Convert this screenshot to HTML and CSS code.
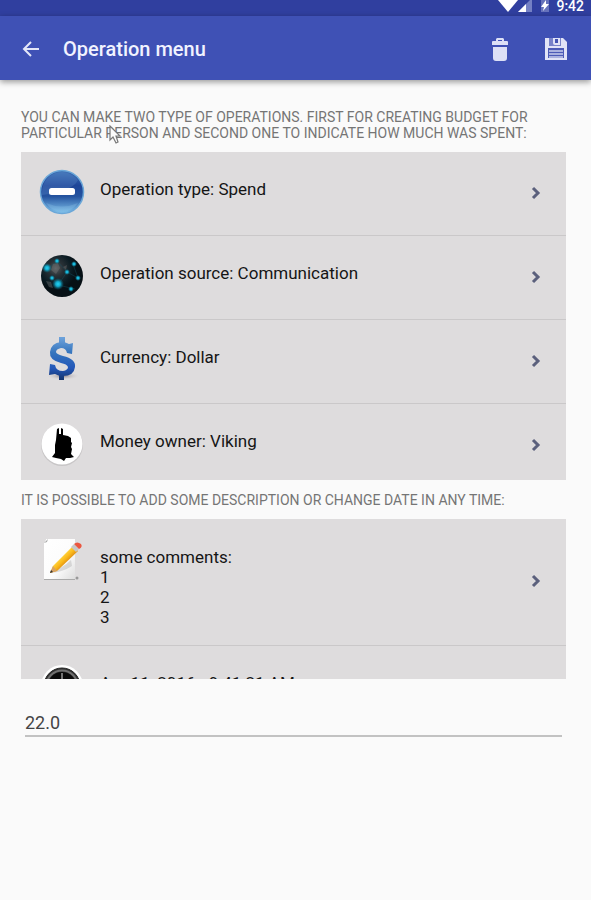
FILE: index.html
```html
<!DOCTYPE html>
<html lang="en">
<head>
<meta charset="utf-8">
<meta name="viewport" content="width=device-width, initial-scale=1">
<title>Operation menu</title>
<link rel="stylesheet" href="styles.css">
</head>
<body>
<div class="status">
  <svg class="status-icons" width="54" height="16" viewBox="0 0 54 16" aria-hidden="true">
    <path d="M0 0H20L10 12Z" fill="#fff"/>
    <path d="M34 -2V12H20Z" fill="#7480c4"/>
    <path d="M28 4V12H20Z" fill="#fff"/>
    <path d="M43 0H51V12H43Z" fill="#6672bb"/>
    <path d="M48 0L43 7H46L45 11L51 4H48Z" fill="#fff"/>
  </svg>
  <span class="clock">9:42</span>
</div>
<header class="bar">
  <button class="icon-button" type="button" aria-label="Back">
    <svg width="18" height="18" viewBox="0 0 18 18" fill="none" stroke="#e4e7f8" stroke-width="2"><path d="M17 9H2M9 2L2 9L9 16"/></svg>
  </button>
  <h1 class="title">Operation menu</h1>
  <button class="icon-button" type="button" aria-label="Delete">
    <svg width="18" height="24" viewBox="0 0 18 24" fill="#dce0f6"><path d="M1 5Q1 4 2 4H5V2L6 1H12L13 2V4H16Q17 4 17 5V8H1ZM7 3V4H11V3ZM2 10H16V21Q16 24 13 24H5Q2 24 2 21Z" fill-rule="evenodd"/></svg>
  </button>
  <button class="icon-button save" type="button" aria-label="Save">
    <svg width="24" height="24" viewBox="0 0 24 24"><path d="M1 1H19L23 5V23H1Z" fill="#e1e4f7"/><path d="M5 1H17V9H5Z" fill="#7883c9"/><path d="M9 1H16V8H11Q9 8 9 6Z" fill="#e1e4f7"/><path d="M11 2H14V6H11Z" fill="#4455b3"/><path d="M4 11H20V21H4Z" fill="#4c5bb7"/><path d="M5 13H19V15H5ZM5 16H19V18H5ZM5 19H19V21H5Z" fill="#aab2df"/></svg>
  </button>
</header>
<main class="content">
  <div class="hint-wrap">
    <h2 class="hint">You can make two type of operations. First for creating budget for particular person and second one to indicate how much was spent:</h2>
    <svg class="pointer" width="14" height="20" viewBox="0 0 14 20" aria-hidden="true"><path d="M2 1V15L5 12L8 18L10 17L8 11H12Z" fill="#fafafa" stroke="#777" stroke-width="1.2"/></svg>
  </div>
  <ul class="list list-main">
    <li><button class="row" type="button">
      <svg class="picture" width="48" height="48" viewBox="0 0 48 48" aria-hidden="true">
        <defs><linearGradient id="ball" x2="0" y2="1"><stop stop-color="#3d72b7"/><stop offset=".35" stop-color="#1e4598"/><stop offset=".6" stop-color="#24539f"/><stop offset="1" stop-color="#82c4ed"/></linearGradient></defs>
        <circle cx="24" cy="24" r="21.5" fill="url(#ball)" stroke="#6ba7d8" stroke-width="1.5"/>
        <path d="M4 24A20 20 0 0 1 40 12Q35 23 4 27Z" fill="#6d9bd2" opacity=".25"/>
        <path d="M8 35A19 19 0 0 0 40 35Q24 42 8 35Z" fill="#a9dcf4" opacity=".2"/>
        <rect x="11" y="20" width="26" height="7" rx="2.5" fill="#fff"/>
      </svg>
      <span class="label">Operation type: Spend</span>
      <svg class="chevron" width="10" height="14" viewBox="0 0 10 14" aria-hidden="true"><path d="M2 2L7 7L2 12"/></svg>
    </button></li>
    <li><button class="row" type="button">
      <svg class="picture" width="48" height="48" viewBox="0 0 48 48" aria-hidden="true">
        <defs><radialGradient id="globe" cx=".35" cy=".32"><stop stop-color="#555b5e"/><stop offset=".35" stop-color="#293136"/><stop offset=".75" stop-color="#0b1c23"/><stop offset="1" stop-color="#071015"/></radialGradient><radialGradient id="spot"><stop stop-color="#24d4f4"/><stop offset=".4" stop-color="#13a8ca"/><stop offset="1" stop-color="#0a6377" stop-opacity="0"/></radialGradient></defs>
        <circle cx="24" cy="24" r="21" fill="url(#globe)"/>
        <path d="M9 17L19 9L29 20L20 33L37 37M29 20L40 26L35 12M14 26L20 33" fill="none" stroke="#155263" stroke-width="1" opacity=".4"/>
        <path d="M15 12L20 11L22 16L18 22L13 18ZM25 15L29 13L28 18ZM8 29L13 30L15 36L11 35Z" fill="#777779" opacity=".4"/>
        <g fill="url(#spot)"><circle cx="9" cy="16" r="5"/><circle cx="20" cy="32" r="6"/><circle cx="29" cy="20" r="3"/><circle cx="36" cy="12" r="3"/><circle cx="40" cy="26" r="3"/><circle cx="33" cy="37" r="3"/><circle cx="14" cy="26" r="3"/><circle cx="19" cy="9" r="3"/></g>
      </svg>
      <span class="label">Operation source: Communication</span>
      <svg class="chevron" width="10" height="14" viewBox="0 0 10 14" aria-hidden="true"><path d="M2 2L7 7L2 12"/></svg>
    </button></li>
    <li><button class="row" type="button">
      <svg class="picture" width="48" height="48" viewBox="0 0 48 48" aria-hidden="true">
        <defs><linearGradient id="money" gradientUnits="userSpaceOnUse" x1="24" y1="2" x2="24" y2="45"><stop stop-color="#6ca1da"/><stop offset=".35" stop-color="#3474bd"/><stop offset=".7" stop-color="#2458b9"/><stop offset="1" stop-color="#123066"/></linearGradient><radialGradient id="floor"><stop stop-color="#8c8388"/><stop offset="1" stop-color="#dedbdd" stop-opacity="0"/></radialGradient></defs>
        <ellipse cx="25" cy="40" rx="17" ry="4" fill="url(#floor)"/>
        <path d="M21 1H27V8H21ZM21 37H26V44H21Z" fill="url(#money)"/>
        <path d="M35 7L34 18L29 17Q28 12 23 12Q18 13 18 16Q18 18 25 20Q38 23 37 31Q36 40 25 40Q20 40 17 38L11 39L12 28L17 29Q18 35 25 35Q30 34 30 31Q29 28 23 27Q11 24 12 16Q13 7 23 6Q28 6 31 8Z" fill="url(#money)"/>
      </svg>
      <span class="label">Currency: Dollar</span>
      <svg class="chevron" width="10" height="14" viewBox="0 0 10 14" aria-hidden="true"><path d="M2 2L7 7L2 12"/></svg>
    </button></li>
    <li><button class="row" type="button">
      <svg class="picture" width="48" height="48" viewBox="0 0 48 48" aria-hidden="true">
        <circle cx="24" cy="25" r="21" fill="#c8c6c7"/><circle cx="24" cy="24" r="20.5" fill="#fff"/>
        <path d="M19 9L21 8V14H23L23 8L25 9V15L30 16L33 18V22L34 23L33 27L34 29L33 34L36 37L32 38H28L26 41L23 39L18 38L14 37L17 33V27L17 25L18 20Z" fill="#000"/>
      </svg>
      <span class="label">Money owner: Viking</span>
      <svg class="chevron" width="10" height="14" viewBox="0 0 10 14" aria-hidden="true"><path d="M2 2L7 7L2 12"/></svg>
    </button></li>
  </ul>
  <h2 class="hint hint-second">It is possible to add some description or change date in any time:</h2>
  <ul class="list list-extra">
    <li><button class="row row-tall" type="button">
      <svg class="picture" width="48" height="48" viewBox="0 0 48 48" aria-hidden="true">
        <defs><linearGradient id="pencil" gradientUnits="userSpaceOnUse" x1="24" y1="21" x2="30" y2="27"><stop stop-color="#ffd43d"/><stop offset=".5" stop-color="#fbb91b"/><stop offset="1" stop-color="#dc8b13"/></linearGradient><linearGradient id="sheet" x2="1" y2="1"><stop stop-color="#fff"/><stop offset=".6" stop-color="#fcfcfc"/><stop offset="1" stop-color="#ddd"/></linearGradient></defs>
        <path d="M8 4H37V45H6V8Z" fill="#aaa"/><path d="M8 4H37V44H6V8Z" fill="url(#sheet)"/><path d="M6 8L10 4L9 7Z" fill="#aaa"/>
        <path d="M12 37Q25 33 33 25L34 31Q25 37 12 38Z" fill="#b9b9b9" opacity=".5"/>
        <path d="M12 38L15 31L35 11L40 16L19 36Z" fill="url(#pencil)"/><path d="M12 38L15 31L19 36Z" fill="#d7a264"/><path d="M12 38L13 35L15 37Z" fill="#333"/><path d="M33 12L36 9L41 14L38 17Z" fill="#c7c7c7"/><path d="M36 9Q39 6 43 9Q45 12 41 14Z" fill="#eb5740"/>
        <circle cx="39" cy="43" r="1.5" fill="#999"/>
      </svg>
      <span class="label">some comments:<br>1<br>2<br>3</span>
      <svg class="chevron" width="10" height="14" viewBox="0 0 10 14" aria-hidden="true"><path d="M2 2L7 7L2 12"/></svg>
    </button></li>
    <li><button class="row" type="button">
      <svg class="picture" width="48" height="48" viewBox="0 0 48 48" aria-hidden="true">
        <circle cx="24" cy="24" r="21" fill="#fff"/><circle cx="24" cy="24" r="18" fill="#333" stroke="#222" stroke-width="1"/><circle cx="24" cy="24" r="15.5" fill="none" stroke="#707070" stroke-width="2"/><circle cx="24" cy="24" r="14" fill="#0b0b0b"/><path d="M24 11V25L31 30" fill="none" stroke="#ddd" stroke-width="1"/>
      </svg>
      <span class="label">Apr 11, 2016 - 9:41:21 AM</span>
      <svg class="chevron" width="10" height="14" viewBox="0 0 10 14" aria-hidden="true"><path d="M2 2L7 7L2 12"/></svg>
    </button></li>
  </ul>
  <input class="amount" type="text" inputmode="decimal" value="22.0" aria-label="Amount">
</main>
</body>
</html>
```
FILE: styles.css
```css
* { box-sizing: border-box; }

body {
  margin: 0;
  min-height: 100vh;
  background: #fafafa;
  color: #151515;
  font-family: Roboto, "Liberation Sans", sans-serif;
}

button {
  padding: 0;
  border: 0;
  background: none;
  color: inherit;
  font: inherit;
  cursor: pointer;
}

svg { display: block; flex: none; }

.status {
  display: flex;
  justify-content: flex-end;
  gap: 4px;
  height: 16px;
  padding-right: 7px;
  background: #303f9f;
}

.clock {
  color: #fff;
  font-size: 14px;
  font-weight: 500;
  line-height: 12px;
}

.bar {
  display: flex;
  align-items: center;
  height: 64px;
  padding: 2px 23px 0 19px;
  background: #3f51b5;
  box-shadow: 0 2px 6px rgba(0, 0, 0, .4);
}

.icon-button {
  display: grid;
  place-items: center;
  min-width: 24px;
  height: 40px;
}

.save { margin-left: 32px; }

.title {
  flex: 1;
  margin: 0 0 0 20px;
  color: #f1f3ff;
  font-size: 20px;
  font-weight: 500;
  line-height: 24px;
}

.content { padding: 29px 25px 24px 21px; }

.hint-wrap { position: relative; }

.hint {
  margin: 0;
  color: #757575;
  font-size: 14px;
  font-weight: 400;
  line-height: 16px;
  text-transform: uppercase;
}

.hint-second { padding: 12px 0 11px; }

.pointer {
  position: absolute;
  top: 16px;
  left: 87px;
}

.list {
  margin: 0;
  padding: 0;
  overflow: hidden;
  background: #dedcdd;
  list-style: none;
}

.list-main { height: 328px; margin-top: 11px; }

.list-extra { height: 160px; }

.list li { border-bottom: 1px solid #cac8c9; }

.row {
  display: flex;
  align-items: flex-start;
  width: 100%;
  min-height: 83px;
  padding: 16px 25px 18px 17px;
  text-align: left;
}

.row-tall { min-height: 125px; }

.label {
  flex: 1;
  padding: 11px 0 0 14px;
  font-size: 17px;
  line-height: 20px;
}

.row-tall .label { padding-top: 12px; }

.chevron {
  align-self: center;
  fill: none;
  stroke: #5b607c;
  stroke-width: 3;
}

.amount {
  display: block;
  width: calc(100% - 8px);
  height: 36px;
  margin: 22px 4px 0;
  padding: 10px 0 2px;
  border: 0;
  border-bottom: 2px solid #c2c2c2;
  outline: 0;
  background: transparent;
  color: #444;
  font: 18px/22px Roboto, "Liberation Sans", sans-serif;
}
```
